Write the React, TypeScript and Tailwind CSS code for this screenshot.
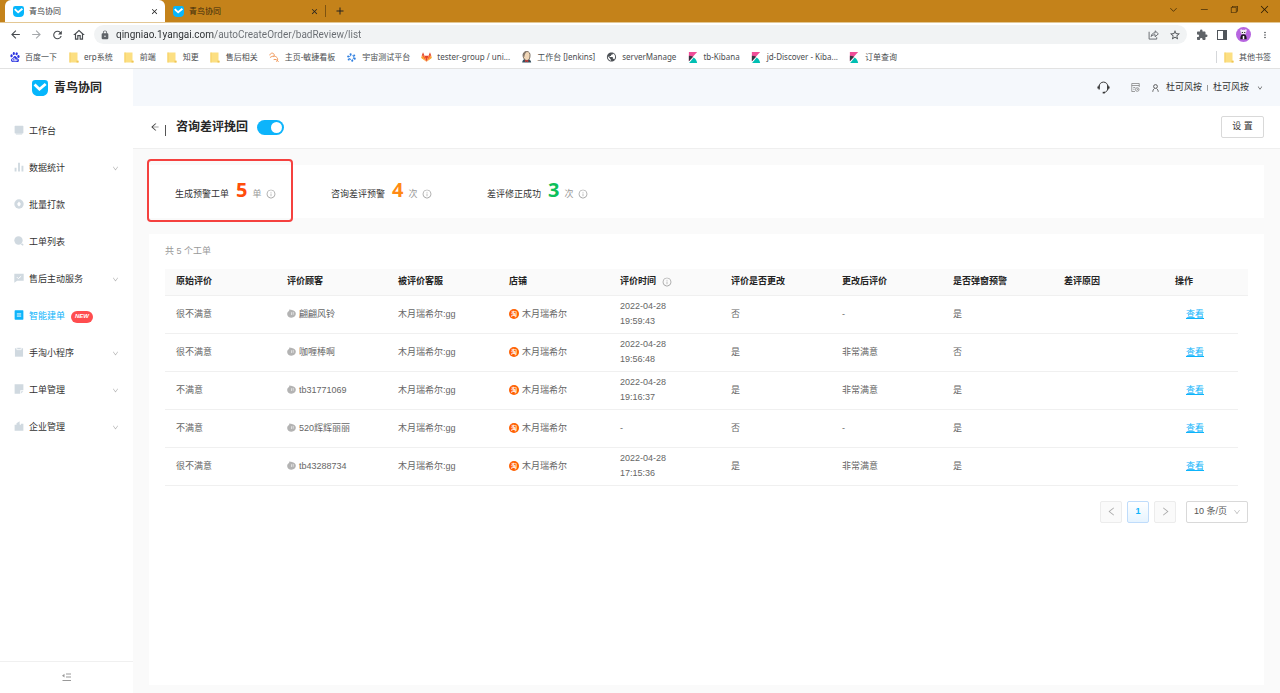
import { useState } from "react";
import type { ReactNode } from "react";
import { clsx } from "clsx";
import {
  MdAdd,
  MdArrowBack,
  MdArrowForward,
  MdClose,
  MdExtension,
  MdLock,
  MdMoreVert,
  MdOutlineHome,
  MdPublic,
  MdRefresh,
  MdStarBorder,
} from "react-icons/md";
import { VscChevronDown, VscChromeClose, VscChromeMinimize, VscChromeRestore } from "react-icons/vsc";
import {
  AiOutlineArrowLeft,
  AiOutlineDown,
  AiOutlineInfoCircle,
  AiOutlineLeft,
  AiOutlineRight,
} from "react-icons/ai";
import { SiBaidu } from "react-icons/si";

const UI_FONT = "font-['Noto_Sans','Noto_Sans_CJK_SC',sans-serif]";
const APP_FONT = "font-['Liberation_Sans','Noto_Sans_CJK_SC',sans-serif]";

function BrandMark({ className }: { className?: string }) {
  return (
    <svg viewBox="0 0 24 24" className={className} aria-hidden="true">
      <path d="M5 0h14a5 5 0 0 1 5 5v10c0 5.500-3.500 9-9 9H9c-5.500 0-9-3.500-9-9V5a5 5 0 0 1 5-5z" fill="#06b6fc" />
      <path d="M3.800 6.800l7.400 7L20.500 6" fill="none" stroke="#fff" strokeWidth="4.200" />
    </svg>
  );
}

function FolderIcon() {
  return (
    <svg viewBox="0 0 10 11" className="h-[11px] w-[10px]" aria-hidden="true">
      <path d="M.5.5h8v8.200h1v1.800h-9z" fill="#fcdf82" />
      <path d="M.5.5h1v10h-1z" fill="#f5cf62" />
      <path d="M7.500 8.700h2v1.800h-2z" fill="#efc454" />
    </svg>
  );
}

function BoardIcon() {
  return (
    <svg viewBox="0 0 12 12" className="h-[10px] w-[10px]" fill="none" stroke="#f29a5c" strokeWidth="1.200" strokeLinecap="round" aria-hidden="true">
      <path d="M1 3.500C1.600 1 4.800.6 6 2.600c.7 1.200.3 2.400-.6 3" />
      <path d="M1.500 6.500c2.500-2.400 6.500-1.900 8.200.3 1.100 1.600.8 3.600-.4 4.700" />
      <path d="M6 9c1.800-.6 3.600.2 5.200 2.300" />
    </svg>
  );
}

function CosmosIcon() {
  return (
    <svg viewBox="0 0 12 12" className="h-[9px] w-[9px]" fill="#2f7fe0" aria-hidden="true">
      <circle cx="6" cy="6" r="2.900" fill="none" stroke="#2f7fe0" strokeWidth="1.200" strokeDasharray="3 1.500" />
      <circle cx="4.800" cy="1.600" r="1.400" />
      <circle cx="9.600" cy="3.400" r="1.400" />
      <circle cx="10.300" cy="7.500" r="1.400" />
      <circle cx="7" cy="10.400" r="1.400" />
      <circle cx="2.300" cy="8.600" r="1.400" />
      <circle cx="1.600" cy="4.600" r="1.400" />
    </svg>
  );
}

function GitlabIcon() {
  return (
    <svg viewBox="0 0 24 24" className="h-3 w-3" aria-hidden="true">
      <path d="M12 22.500L7.600 9h8.800z" fill="#e24329" />
      <path d="M12 22.500L1.600 9h6zM12 22.500L22.400 9h-6z" fill="#fc6d26" />
      <path d="M12 22.500L.5 14 1.600 9zM12 22.500L23.500 14l-1.100-5z" fill="#fca326" />
      <path d="M1.600 9l2.800-7.500L7.600 9zM22.400 9l-2.800-7.500L16.400 9z" fill="#e24329" />
    </svg>
  );
}

function JenkinsIcon() {
  return (
    <svg viewBox="0 0 12 14" className="h-3 w-[11px]" aria-hidden="true">
      <path d="M1 13.500c0-3 2-4.500 5-4.500s5.500 1.500 5.500 4.500z" fill="#335061" />
      <path d="M2 6C1.500 2.500 3.500.5 6.300.5S10.800 3 10 7 7.500 11 6 11 2.500 9 2 6z" fill="#f0d6b7" stroke="#4a3c31" strokeWidth=".8" />
      <path d="M2 6C1.500 2 4.500.3 7 .8 4.500 2 4 3.500 3.500 7z" fill="#81756a" />
      <path d="M6 10.500l2.500 1-1 1.500-1.500-1-1.500 1-.5-1.800z" fill="#d33833" />
    </svg>
  );
}

function KibanaIcon() {
  return (
    <svg viewBox="0 0 20 24" className="h-[11px] w-[10px]" aria-hidden="true">
      <path d="M1 0h18L1 20z" fill="#f04e98" />
      <path d="M1 8c3.400 0 6.500.9 9.300 2.400L1 20z" fill="#343741" />
      <path d="M11.500 12c4 2.500 6.700 6.800 7.500 12H1.500z" fill="#00bfb3" />
    </svg>
  );
}

function ShareIcon() {
  return (
    <svg viewBox="0 0 12 12" className="h-[11px] w-[11px]" fill="none" stroke="#5f6368" strokeWidth="1" aria-hidden="true">
      <path d="M1.200 3v8h8.300V9" />
      <path d="M3.500 8.200c.3-2.600 1.800-4 4.300-4V2l3.500 3.300-3.500 3.200V6.300c-2 0-3.300.5-4.300 1.900z" />
    </svg>
  );
}

function PandaAvatar() {
  return (
    <svg viewBox="0 0 16 16" className="h-[15px] w-[15px]" aria-hidden="true">
      <circle cx="8" cy="8" r="8" fill="#b765e0" />
      <circle cx="5.600" cy="3.600" r="1.200" fill="#e9dcf0" />
      <circle cx="10.400" cy="3.600" r="1.200" fill="#e9dcf0" />
      <ellipse cx="8" cy="5.400" rx="3" ry="2.500" fill="#efe9f3" />
      <path d="M6.200 5.200h1.200v1.100H6.200zM8.700 5.200h1.200v1.100H8.700z" fill="#222" />
      <path d="M4.600 13c0-3.500 1-5.200 3.400-5.200s3.400 1.700 3.400 5.200z" fill="#1c1520" />
      <path d="M7.200 9.500h1.600V13H7.200z" fill="#fff" />
    </svg>
  );
}

function HeadsetIcon() {
  return (
    <svg viewBox="0 0 24 24" className="h-[13px] w-[13px]" fill="none" stroke="#333" strokeWidth="1.800" aria-hidden="true">
      <path d="M4 10a8 8 0 0 1 16 0v4" />
      <path d="M20 14c-.5 4-3 7-7 7" />
      <path d="M4 8.500v7M2 10v4M20 8.500v7M22 10v4" strokeWidth="2.400" />
      <path d="M10.500 21.500h4" strokeWidth="3" />
    </svg>
  );
}

function LogIcon() {
  return (
    <svg viewBox="0 0 18 18" className="h-[9px] w-[9px]" fill="none" stroke="#777" strokeWidth="1.400" aria-hidden="true">
      <path d="M8 17H1.500V1h15v7" />
      <path d="M1.500 5h15M4.500 9h4M4.500 12.500h2.500" />
      <circle cx="12.500" cy="13" r="3.600" />
      <path d="M12.500 11v2h2" />
    </svg>
  );
}

function PersonIcon() {
  return (
    <svg viewBox="0 0 14 16" className="h-2 w-[7px]" fill="none" stroke="#444" strokeWidth="1.700" aria-hidden="true">
      <circle cx="7" cy="5" r="3.800" />
      <path d="M1.500 15.500c.3-3.500 2-5.300 3.300-6.500M12.500 15.500c-.3-3.500-2-5.300-3.300-6.500" />
    </svg>
  );
}

function DropIcon() {
  return (
    <svg viewBox="0 0 16 16" className="mb-px h-[9px] w-[9px] shrink-0" aria-hidden="true">
      <path d="M4.500.5c1 1 1.800.9 4.200 1.200 4 .4 7 3 7 6.800s-3.200 7-7.700 7S.3 12.800.3 9c0-2.400 1.100-4 2.700-5C4 3 4.500 2 4.500.5z" fill="#b3b3b3" />
      <path d="M8 6.500v3.500M11 6v3.500" stroke="#eee" strokeWidth="1.300" strokeLinecap="round" />
    </svg>
  );
}

type NavItem = {
  label: string;
  icon: ReactNode;
  expandable?: boolean;
  active?: boolean;
};

const navItems: NavItem[] = [
  {
    label: "工作台",
    icon: <path d="M2 1h12a1 1 0 0 1 1 1v10.500a1 1 0 0 1-1 1H2a1 1 0 0 1-1-1V2a1 1 0 0 1 1-1zM3 14h10v1H3z" />,
  },
  {
    label: "数据统计",
    icon: <path d="M1 9h3v6H1zM6.500 1h3v14h-3zM12 6h3v9h-3z" />,
    expandable: true,
  },
  {
    label: "批量打款",
    icon: (
      <>
        <circle cx="8" cy="8" r="7.500" />
        <path d="M8 4l2.500 3v2.500L8 12 5.500 9.500V7z" fill="#fff" />
      </>
    ),
  },
  {
    label: "工单列表",
    icon: (
      <>
        <circle cx="7.200" cy="7.200" r="6.700" />
        <path d="M11 13.500l2-2 2.500 2.500-1.500 1.500z" />
      </>
    ),
  },
  {
    label: "售后主动服务",
    icon: (
      <>
        <path d="M.5 1h15v11.500H5L.5 15.500z" />
        <path d="M4.500 6.500l2.500 2.500 4.500-4" fill="none" stroke="#fff" strokeWidth="1.600" />
      </>
    ),
    expandable: true,
  },
  {
    label: "智能建单",
    icon: (
      <>
        <rect x="1" y="0.500" width="14" height="15" rx="1" />
        <path d="M4.500 6.300h7M4.500 9.700h7" stroke="#fff" strokeWidth="1.600" />
      </>
    ),
    active: true,
  },
  {
    label: "手淘小程序",
    icon: (
      <>
        <path d="M1.500 2h13v13.500h-13z" />
        <path d="M4.500.6h7v3.600h-7z" stroke="#fff" strokeWidth="1.200" />
      </>
    ),
    expandable: true,
  },
  {
    label: "工单管理",
    icon: (
      <>
        <path d="M1 .5h14v9.500h-5v5.500H1z" />
        <path d="M11.500 11.500H15l-3.500 3.800z" />
      </>
    ),
    expandable: true,
  },
  {
    label: "企业管理",
    icon: <path d="M1 6h3V3.500L9 .5v5l2 1V4.500h4V15.500H1z" />,
    expandable: true,
  },
];

const bookmarks: { label: string; icon: ReactNode }[] = [
  { label: "百度一下", icon: <SiBaidu className="h-[10px] w-[10px] text-[#2932e1]" /> },
  { label: "erp系统", icon: <FolderIcon /> },
  { label: "前端", icon: <FolderIcon /> },
  { label: "知更", icon: <FolderIcon /> },
  { label: "售后相关", icon: <FolderIcon /> },
  { label: "主页-敏捷看板", icon: <BoardIcon /> },
  { label: "宇宙测试平台", icon: <CosmosIcon /> },
  { label: "tester-group / uni...", icon: <GitlabIcon /> },
  { label: "工作台 [Jenkins]", icon: <JenkinsIcon /> },
  { label: "serverManage", icon: <MdPublic className="h-3 w-3 text-[#4d5156]" /> },
  { label: "tb-Kibana", icon: <KibanaIcon /> },
  { label: "jd-Discover - Kiba...", icon: <KibanaIcon /> },
  { label: "订单查询", icon: <KibanaIcon /> },
];

const stats = [
  { label: "生成预警工单", value: 5, unit: "单", color: "text-[#ff4d0a]" },
  { label: "咨询差评预警", value: 4, unit: "次", color: "text-[#ff8a14]" },
  { label: "差评修正成功", value: 3, unit: "次", color: "text-[#0dbf5b]" },
];

const columns = [
  "原始评价",
  "评价顾客",
  "被评价客服",
  "店铺",
  "评价时间",
  "评价是否更改",
  "更改后评价",
  "是否弹窗预警",
  "差评原因",
];

const reviews = [
  { rating: "很不满意", customer: "翩翩风铃", date: "2022-04-28", time: "19:59:43", changed: "否", after: "-", popup: "是" },
  { rating: "很不满意", customer: "咖喱棒啊", date: "2022-04-28", time: "19:56:48", changed: "是", after: "非常满意", popup: "否" },
  { rating: "不满意", customer: "tb31771069", date: "2022-04-28", time: "19:16:37", changed: "是", after: "非常满意", popup: "是" },
  { rating: "不满意", customer: "520辉辉丽丽", date: "-", time: "", changed: "否", after: "-", popup: "是" },
  { rating: "很不满意", customer: "tb43288734", date: "2022-04-28", time: "17:15:36", changed: "是", after: "非常满意", popup: "是" },
];

function BrowserTab({ active }: { active?: boolean }) {
  return (
    <div
      className={clsx(
        "flex h-[22px] w-[160px] items-center rounded-t-md pr-[6px] pl-2 text-[8px]",
        active ? "bg-white text-[#3c4043]" : "text-[#3b2a0c]"
      )}
    >
      <BrandMark className="h-[11px] w-[11px]" />
      <span className="ml-[5px] flex-1">青鸟协同</span>
      <button type="button" aria-label="关闭标签页">
        <MdClose className="h-[9px] w-[9px] text-[#222]" />
      </button>
    </div>
  );
}

function BrowserChrome() {
  const [url, setUrl] = useState("qingniao.1yangai.com/autoCreateOrder/badReview/list");

  return (
    <div className={UI_FONT}>
      <div className="flex h-[23px] items-center justify-between border-b border-[#e3c794] bg-[#c4821a] pl-[5px]">
        <div className="flex items-center">
          <BrowserTab active />
          <BrowserTab />
          <span className="h-3 w-px bg-[#7d5310]" />
          <button type="button" aria-label="新标签页" className="ml-2">
            <MdAdd className="h-3 w-3 text-[#222]" />
          </button>
        </div>
        <div className="flex items-center gap-5 pr-[10px] pb-1 text-[#2c1d05]">
          <button type="button" aria-label="搜索标签页">
            <VscChevronDown className="h-[11px] w-[11px]" />
          </button>
          <button type="button" aria-label="最小化">
            <VscChromeMinimize className="h-[10px] w-[10px]" />
          </button>
          <button type="button" aria-label="还原">
            <VscChromeRestore className="h-[10px] w-[10px]" />
          </button>
          <button type="button" aria-label="关闭">
            <VscChromeClose className="h-[11px] w-[11px]" />
          </button>
        </div>
      </div>

      <div className="flex h-[23px] items-center bg-white pr-[10px] pl-[9px] text-[#474b4f]">
        <div className="flex items-center gap-2">
          <button type="button" aria-label="后退">
            <MdArrowBack className="h-[13px] w-[13px]" />
          </button>
          <button type="button" aria-label="前进">
            <MdArrowForward className="h-[13px] w-[13px] text-[#a5a8ab]" />
          </button>
          <button type="button" aria-label="重新加载">
            <MdRefresh className="h-[14px] w-[13px]" />
          </button>
          <button type="button" aria-label="主页">
            <MdOutlineHome className="h-[14px] w-[14px]" />
          </button>
        </div>
        <div className="ml-2 flex h-[19px] flex-1 items-center rounded-full bg-[#f1f3f4] pr-[6px] pl-[6px]">
          <MdLock className="h-[10px] w-[10px] text-[#5f6368]" />
          <input
            type="text"
            aria-label="地址栏"
            value={url}
            onChange={(e) => setUrl(e.target.value)}
            className="ml-[6px] min-w-0 flex-1 bg-[linear-gradient(to_right,#2a2d30_98px,#686c71_98px)] bg-clip-text font-[Roboto,sans-serif] text-[10px] text-transparent caret-black outline-none"
          />
          <button type="button" aria-label="分享">
            <ShareIcon />
          </button>
          <button type="button" aria-label="加入书签" className="ml-[10px]">
            <MdStarBorder className="h-3 w-3" />
          </button>
        </div>
        <div className="ml-[9px] flex items-center gap-[9px]">
          <button type="button" aria-label="扩展程序">
            <MdExtension className="h-3 w-3 text-[#5f6368]" />
          </button>
          <button type="button" aria-label="侧边栏" className="h-[10px] w-[10px] border border-r-4 border-[#50555a]" />
          <button type="button" aria-label="个人资料">
            <PandaAvatar />
          </button>
          <button type="button" aria-label="菜单">
            <MdMoreVert className="h-[14px] w-[10px]" />
          </button>
        </div>
      </div>

      <div className="flex h-[23px] items-center border-b border-[#e2e2e2] bg-white pr-[9px] pl-[9px] text-[8px] text-[#4a4d50]">
        <nav className="flex flex-1 items-center gap-[11px]">
          {bookmarks.map((b) => (
            <a key={b.label} href="#" className="flex items-center gap-[5px] whitespace-nowrap">
              <span className="flex w-[11px] justify-center">{b.icon}</span>
              {b.label}
            </a>
          ))}
        </nav>
        <a href="#" className="flex items-center gap-[5px] border-l border-[#d5d7da] pl-[7px]">
          <FolderIcon />
          其他书签
        </a>
      </div>
    </div>
  );
}

function Sidebar() {
  return (
    <aside className="flex w-[133px] shrink-0 flex-col bg-white">
      <div className="flex h-[37px] items-center gap-[6px] pl-8 text-[12px] font-bold text-[#262626]">
        <BrandMark className="h-4 w-4" />
        青鸟协同
      </div>
      <nav className="flex flex-1 flex-col pt-[7px]">
        {navItems.map((item) => (
          <a
            key={item.label}
            href="#"
            className={clsx(
              "flex h-[37px] items-center pr-[14px] pl-[14px] text-[9px]",
              item.active ? "text-[#0db4fb]" : "text-[#333]"
            )}
          >
            <svg
              viewBox="0 0 16 16"
              className={clsx("mr-[5px] mb-[3px] h-[10px] w-[10px]", item.active ? "text-[#0db4fb]" : "text-[#d0d9e0]")}
              fill="currentColor"
              aria-hidden="true"
            >
              {item.icon}
            </svg>
            {item.label}
            {item.active && (
              <span className="ml-[6px] flex h-3 w-[22px] items-center justify-center rounded-full bg-[#ff4d4f] text-[6px] font-bold text-white italic">
                NEW
              </span>
            )}
            {item.expandable && <AiOutlineDown className="ml-auto h-[7px] w-[7px] text-[#aaa]" />}
          </a>
        ))}
      </nav>
      <button
        type="button"
        aria-label="收起菜单"
        className="flex h-8 items-center justify-center border-t border-[#f0f0f0]"
      >
        <svg viewBox="0 0 9 9" className="h-[9px] w-[9px]" fill="#999" aria-hidden="true">
          <path d="M4 .5h5v1H4zM4 3.500h5v1H4zM.5 7h8.500v1H.5zM0 2.700L2.500.8v3.800z" />
        </svg>
      </button>
    </aside>
  );
}

function TopBar() {
  return (
    <header className="flex h-[37px] items-center justify-end bg-[#f5f8fc] pr-[17px] text-[9px] text-[#333]">
      <button type="button" aria-label="客服" className="mr-[21px]">
        <HeadsetIcon />
      </button>
      <button type="button" aria-label="日志" className="mr-3">
        <LogIcon />
      </button>
      <button type="button" className="flex items-center">
        <PersonIcon />
        <span className="ml-[7px]">杜可风按</span>
        <span className="mx-[5px] h-[6px] w-px bg-[#999]" />
        <span>杜可风按</span>
        <AiOutlineDown className="ml-2 h-[6px] w-[6px]" />
      </button>
    </header>
  );
}

function TitleBar() {
  const [enabled, setEnabled] = useState(true);

  return (
    <div className="flex h-[43px] items-center border-b border-[#efefef] bg-white pr-4 pl-[17px]">
      <a href="#" aria-label="返回">
        <AiOutlineArrowLeft className="h-[10px] w-[10px] text-[#444]" />
      </a>
      <span className="mt-[6px] ml-[5px] h-[11px] w-px bg-[#555]" />
      <h1 className="ml-[10px] text-[12px] font-bold text-[#262626]">咨询差评挽回</h1>
      <input
        type="checkbox"
        role="switch"
        aria-label="咨询差评挽回"
        checked={enabled}
        onChange={() => setEnabled(!enabled)}
        className="ml-[9px] flex h-[15px] w-[27px] appearance-none items-center rounded-full bg-gray-300 p-[2px] before:h-[11px] before:w-[11px] before:rounded-full before:bg-white checked:justify-end checked:bg-[#0db4fb]"
      />
      <button
        type="button"
        className="ml-auto h-[22px] w-[43px] rounded-xs border border-[#d9d9d9] bg-white text-[9px] text-[#333]"
      >
        设 置
      </button>
    </div>
  );
}

function StatsCard() {
  return (
    <section className="relative flex h-[53px] items-center bg-white pb-1 pl-[26px] text-[9px]">
      {stats.map((s) => (
        <div key={s.label} className="flex w-[156px] items-baseline gap-[5px]">
          <span className="min-w-[56px] text-[#333]">{s.label}</span>
          <span className={clsx("font-['Open_Sans',sans-serif] text-[20px] leading-6 font-bold", s.color)}>{s.value}</span>
          <span className="text-[#999]">{s.unit}</span>
          <AiOutlineInfoCircle className="mt-2 h-[10px] w-[10px] self-center text-[#999]" />
        </div>
      ))}
      <div className="pointer-events-none absolute -top-[6px] -left-[2px] h-[63px] w-[146px] rounded-sm border-2 border-[#f5413f]" />
    </section>
  );
}

function ReviewTable() {
  return (
    <table className="w-full table-fixed border-collapse text-left text-[9px]">
      <colgroup>
        {columns.map((c) => (
          <col key={c} className="w-[10.25%]" />
        ))}
        <col />
        <col className="w-[10px]" />
      </colgroup>
      <thead>
        <tr className="h-[26px] border-b border-[#f0f0f0] bg-[#fafafa] text-[#222]">
          {columns.map((c) => (
            <th key={c} className="pl-[11px] font-bold">
              <span className="flex items-center gap-[6px]">
                {c}
                {c === "评价时间" && <AiOutlineInfoCircle className="h-[10px] w-[10px] text-[#999]" />}
              </span>
            </th>
          ))}
          <th className="pl-[11px] font-bold">操作</th>
          <td />
        </tr>
      </thead>
      <tbody className="text-[#666]">
        {reviews.map((r) => (
          <tr key={r.customer} className="h-[38px] leading-[15px] *:border-b *:border-[#f0f0f0] *:last:border-0">
            <td className="pl-[11px]">{r.rating}</td>
            <td className="pl-[11px]">
              <span className="flex items-center gap-[3px]">
                <DropIcon />
                {r.customer}
              </span>
            </td>
            <td className="pl-[11px]">木月瑞希尔:gg</td>
            <td className="pl-[11px]">
              <span className="flex items-center gap-[3px]">
                <span className="flex h-[10px] w-[10px] items-center justify-center rounded-full bg-[#ff6000] text-[6px] leading-none font-bold text-white">
                  淘
                </span>
                木月瑞希尔
              </span>
            </td>
            <td className="pl-[11px]">
              {r.date}
              {r.time && <div>{r.time}</div>}
            </td>
            <td className="pl-[11px]">{r.changed}</td>
            <td className="pl-[11px]">{r.after}</td>
            <td className="pl-[11px]">{r.popup}</td>
            <td />
            <td className="pl-[22px]">
              <a href="#" className="text-[#0db4fb] underline">
                查看
              </a>
            </td>
            <td />
          </tr>
        ))}
      </tbody>
    </table>
  );
}

function Pagination() {
  return (
    <div className="mt-[15px] flex items-center justify-end gap-[5px] text-[9px]">
      <button
        type="button"
        disabled
        aria-label="上一页"
        className="flex h-[22px] w-[22px] items-center justify-center rounded-xs border border-[#ececec] bg-[#fafafa] text-[#aaa]"
      >
        <AiOutlineLeft className="h-[11px] w-[11px]" />
      </button>
      <button
        type="button"
        className="h-[22px] w-[22px] rounded-xs border border-[#bfdcfb] bg-linear-to-b from-white to-[#e6f4ff] font-bold text-[#0db4fb]"
      >
        1
      </button>
      <button
        type="button"
        disabled
        aria-label="下一页"
        className="flex h-[22px] w-[22px] items-center justify-center rounded-xs border border-[#ececec] bg-[#fafafa] text-[#aaa]"
      >
        <AiOutlineRight className="h-[11px] w-[11px]" />
      </button>
      <div className="relative ml-[5px] flex items-center">
        <select
          aria-label="每页条数"
          className="h-[22px] w-[62px] appearance-none rounded-xs border border-[#d9d9d9] bg-white pl-[7px] text-[#555]"
        >
          <option>10 条/页</option>
          <option>20 条/页</option>
          <option>50 条/页</option>
        </select>
        <AiOutlineDown className="pointer-events-none absolute right-[7px] h-2 w-2 text-[#bbb]" />
      </div>
    </div>
  );
}

export default function App() {
  return (
    <div className={clsx("flex min-h-screen flex-col bg-[#fafafa]", APP_FONT)}>
      <BrowserChrome />
      <div className="flex flex-1">
        <Sidebar />
        <div className="flex min-w-0 flex-1 flex-col">
          <TopBar />
          <TitleBar />
          <main className="flex flex-1 flex-col gap-4 px-4 pt-4 pb-2">
            <StatsCard />
            <section className="flex-1 bg-white px-4">
              <p className="flex h-[35px] items-center text-[9px] text-[#999]">共 5 个工单</p>
              <ReviewTable />
              <Pagination />
            </section>
          </main>
        </div>
      </div>
    </div>
  );
}
